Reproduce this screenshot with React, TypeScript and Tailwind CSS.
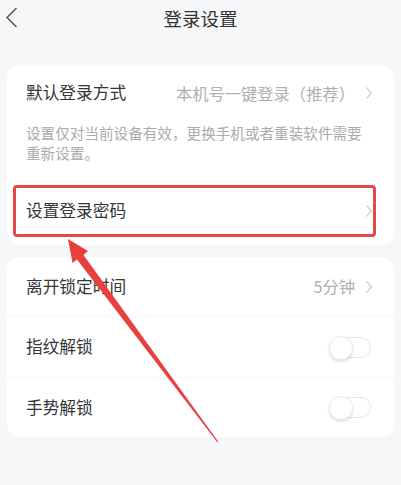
const font = { fontFamily: '"Noto Sans CJK SC", "Noto Sans", sans-serif' }

function Chevron() {
  return (
    <svg width="8" height="14" viewBox="0 0 8 14" className="shrink-0">
      <path d="M1.5 1.5 L6.5 7 L1.5 12.5" fill="none" stroke="#cfcfcf" strokeWidth="1.3" />
    </svg>
  )
}

function Toggle() {
  return (
    <div className="relative w-[41px] h-[21px] rounded-full border border-[#e6e6e6] bg-white">
      <div className="absolute -left-[2px] -top-[2px] w-[24px] h-[24px] rounded-full bg-white border border-[#ececec] shadow-[0_2px_3px_rgba(0,0,0,0.12)]"></div>
    </div>
  )
}

export default function App() {
  return (
    <div className="relative w-[401px] h-[485px] overflow-hidden bg-[#f6f7f9] text-[#363636]" style={font}>
      {/* Header */}
      <div className="relative h-[38px] flex items-center justify-center">
        <svg width="14" height="24" viewBox="0 0 14 24" className="absolute left-[5px] top-[6px]">
          <path d="M11.5 2 L2 11.5 L11.5 21" fill="none" stroke="#555" strokeWidth="1.5" />
        </svg>
        <h1 className="text-[18.5px] text-[#333] leading-none -mt-[2px]">登录设置</h1>
      </div>

      {/* Card 1 */}
      <div className="mx-[7px] mt-[28px] bg-white rounded-[12px]">
        <div className="h-[54px] pl-[19px] pr-[21px] flex items-center justify-between">
          <span className="text-[16.7px]">默认登录方式</span>
          <div className="flex items-center gap-[10px]">
            <span className="text-[16.3px] text-[#b0b0b0]">本机号一键登录（推荐）</span>
            <Chevron />
          </div>
        </div>
        <p className="px-[19px] pt-[3px] text-[14.6px] leading-[20px] text-[#ababab]">
          设置仅对当前设备有效，更换手机或者重装软件需要重新设置。
        </p>
        <div className="h-[82px] pt-[14px] pl-[19px] pr-[21px] flex items-center justify-between">
          <span className="text-[16.7px]">设置登录密码</span>
          <Chevron />
        </div>
      </div>

      {/* Card 2 */}
      <div className="mx-[7px] mt-[12px] bg-white rounded-[12px]">
        <div className="h-[60px] pl-[19px] pr-[21px] flex items-center justify-between border-b border-[#f8f8f8]">
          <span className="text-[16.7px]">离开锁定时间</span>
          <div className="flex items-center gap-[10px]">
            <span className="text-[16.3px] text-[#b0b0b0]">5分钟</span>
            <Chevron />
          </div>
        </div>
        <div className="h-[61px] pl-[19px] pr-[23px] flex items-center justify-between border-b border-[#f6f6f6]">
          <span className="text-[16.7px]">指纹解锁</span>
          <Toggle />
        </div>
        <div className="h-[59px] pl-[19px] pr-[23px] flex items-center justify-between">
          <span className="text-[16.7px]">手势解锁</span>
          <Toggle />
        </div>
      </div>

      {/* Annotation: highlight box */}
      <div className="absolute left-[13px] top-[185px] w-[363px] h-[52px] border-[3px] border-[#e54848] rounded-[4px]"></div>

      {/* Annotation: arrow */}
      <svg className="absolute inset-0 pointer-events-none" width="401" height="485" viewBox="0 0 401 485">
        <polygon points="68,239 88,251 83.5,255 218.5,442 217.5,442.5 77,259.5 72.5,263" fill="#e8403f" />
      </svg>
    </div>
  )
}
